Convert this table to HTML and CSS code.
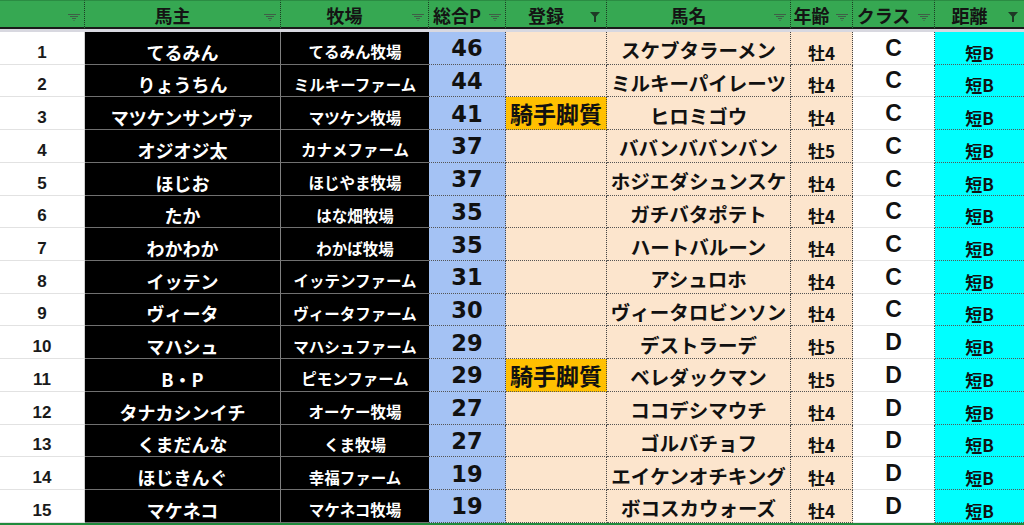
FILE: index.html
```html
<!DOCTYPE html>
<html lang="ja">
<head>
<meta charset="utf-8">
<title>馬主一覧</title>
<link rel="stylesheet" href="styles.css">
</head>
<body>
<div class="sheet">
  <div class="hd"><span class="lbl"></span><svg class="flt" viewBox="0 0 12 8"><path d="M0 0.5H12M2 2.5H10M4 4.5H8M5.5 6.5H6.5" /></svg></div>
  <div class="hd"><span class="lbl">馬主</span><svg class="flt" viewBox="0 0 12 8"><path d="M0 0.5H12M2 2.5H10M4 4.5H8M5.5 6.5H6.5" /></svg></div>
  <div class="hd"><span class="lbl">牧場</span><svg class="flt" viewBox="0 0 12 8"><path d="M0 0.5H12M2 2.5H10M4 4.5H8M5.5 6.5H6.5" /></svg></div>
  <div class="hd"><span class="lbl">総合P</span><svg class="flt" viewBox="0 0 12 8"><path d="M0 0.5H12M2 2.5H10M4 4.5H8M5.5 6.5H6.5" /></svg></div>
  <div class="hd"><span class="lbl">登録</span><svg class="flt on" viewBox="0 0 10 10"><path d="M0 0H10L6 4.5V10H4V4.5Z" /></svg></div>
  <div class="hd"><span class="lbl">馬名</span><svg class="flt" viewBox="0 0 12 8"><path d="M0 0.5H12M2 2.5H10M4 4.5H8M5.5 6.5H6.5" /></svg></div>
  <div class="hd"><span class="lbl">年齢</span><svg class="flt" viewBox="0 0 12 8"><path d="M0 0.5H12M2 2.5H10M4 4.5H8M5.5 6.5H6.5" /></svg></div>
  <div class="hd"><span class="lbl">クラス</span><svg class="flt" viewBox="0 0 12 8"><path d="M0 0.5H12M2 2.5H10M4 4.5H8M5.5 6.5H6.5" /></svg></div>
  <div class="hd last"><span class="lbl">距離</span><svg class="flt on" viewBox="0 0 10 10"><path d="M0 0H10L6 4.5V10H4V4.5Z" /></svg></div>
  <div class="band"></div>

  <div class="c no">1</div><div class="c own">てるみん</div><div class="c farm">てるみん牧場</div><div class="c pt">46</div><div class="c reg"></div><div class="c horse">スケブタラーメン</div><div class="c age">牡4</div><div class="c cls">C</div><div class="c dist">短B</div>
  <div class="c no">2</div><div class="c own">りょうちん</div><div class="c farm">ミルキーファーム</div><div class="c pt">44</div><div class="c reg"></div><div class="c horse">ミルキーパイレーツ</div><div class="c age">牡4</div><div class="c cls">C</div><div class="c dist">短B</div>
  <div class="c no">3</div><div class="c own">マツケンサンヴァ</div><div class="c farm">マツケン牧場</div><div class="c pt">41</div><div class="c reg hl">騎手脚質</div><div class="c horse">ヒロミゴウ</div><div class="c age">牡4</div><div class="c cls">C</div><div class="c dist">短B</div>
  <div class="c no">4</div><div class="c own">オジオジ太</div><div class="c farm">カナメファーム</div><div class="c pt">37</div><div class="c reg"></div><div class="c horse">ババンババンバン</div><div class="c age">牡5</div><div class="c cls">C</div><div class="c dist">短B</div>
  <div class="c no">5</div><div class="c own">ほじお</div><div class="c farm">ほじやま牧場</div><div class="c pt">37</div><div class="c reg"></div><div class="c horse">ホジエダシュンスケ</div><div class="c age">牡4</div><div class="c cls">C</div><div class="c dist">短B</div>
  <div class="c no">6</div><div class="c own">たか</div><div class="c farm">はな畑牧場</div><div class="c pt">35</div><div class="c reg"></div><div class="c horse">ガチバタポテト</div><div class="c age">牡4</div><div class="c cls">C</div><div class="c dist">短B</div>
  <div class="c no">7</div><div class="c own">わかわか</div><div class="c farm">わかば牧場</div><div class="c pt">35</div><div class="c reg"></div><div class="c horse">ハートバルーン</div><div class="c age">牡4</div><div class="c cls">C</div><div class="c dist">短B</div>
  <div class="c no">8</div><div class="c own">イッテン</div><div class="c farm">イッテンファーム</div><div class="c pt">31</div><div class="c reg"></div><div class="c horse">アシュロホ</div><div class="c age">牡4</div><div class="c cls">C</div><div class="c dist">短B</div>
  <div class="c no">9</div><div class="c own">ヴィータ</div><div class="c farm">ヴィータファーム</div><div class="c pt">30</div><div class="c reg"></div><div class="c horse">ヴィータロビンソン</div><div class="c age">牡4</div><div class="c cls">C</div><div class="c dist">短B</div>
  <div class="c no">10</div><div class="c own">マハシュ</div><div class="c farm">マハシュファーム</div><div class="c pt">29</div><div class="c reg"></div><div class="c horse">デストラーデ</div><div class="c age">牡5</div><div class="c cls">D</div><div class="c dist">短B</div>
  <div class="c no">11</div><div class="c own">B・P</div><div class="c farm">ピモンファーム</div><div class="c pt">29</div><div class="c reg hl">騎手脚質</div><div class="c horse">ベレダックマン</div><div class="c age">牡5</div><div class="c cls">D</div><div class="c dist">短B</div>
  <div class="c no">12</div><div class="c own">タナカシンイチ</div><div class="c farm">オーケー牧場</div><div class="c pt">27</div><div class="c reg"></div><div class="c horse">ココデシマウチ</div><div class="c age">牡4</div><div class="c cls">D</div><div class="c dist">短B</div>
  <div class="c no">13</div><div class="c own">くまだんな</div><div class="c farm">くま牧場</div><div class="c pt">27</div><div class="c reg"></div><div class="c horse">ゴルバチョフ</div><div class="c age">牡4</div><div class="c cls">D</div><div class="c dist">短B</div>
  <div class="c no">14</div><div class="c own">ほじきんぐ</div><div class="c farm">幸福ファーム</div><div class="c pt">19</div><div class="c reg"></div><div class="c horse">エイケンオチキング</div><div class="c age">牡4</div><div class="c cls">D</div><div class="c dist">短B</div>
  <div class="c no">15</div><div class="c own">マケネコ</div><div class="c farm">マケネコ牧場</div><div class="c pt">19</div><div class="c reg"></div><div class="c horse">ボコスカウォーズ</div><div class="c age">牡4</div><div class="c cls">D</div><div class="c dist">短B</div>
</div>
</body>
</html>
```

FILE: styles.css
```css
* { box-sizing: border-box; }
html, body { margin: 0; padding: 0; background: #ffffff; }
body {
  width: 1024px;
  height: 525px;
  overflow: hidden;
  font-family: "Noto Sans CJK JP", "Noto Sans", sans-serif;
  font-weight: 700;
  color: #111111;
}
.sheet {
  display: grid;
  grid-template-columns: 85px 196px 148px 77px 101px 184px 62px 82px 89px;
  grid-template-rows: 29px 3px repeat(15, 32.73px);
  border-bottom: 2px solid #1f8a3c;
}
.hd {
  display: flex;
  align-items: center;
  background: #36a852;
  border-top: 1px solid #2b8c43;
  border-right: 1px dotted #1d3b24;
  border-bottom: 2px solid #1a1a1a;
  font-size: 18px;
  line-height: 1;
  color: #141414;
  padding-right: 4px;
}
.hd.last { border-right: none; }
.lbl {
  flex: 1;
  text-align: center;
  padding-top: 1px;
}
.flt {
  width: 12px;
  height: 8px;
  margin-top: 7px;
  margin-left: 4px;
  fill: none;
  stroke: #3f5f47;
  stroke-width: 1.2;
}
.flt.on {
  width: 10px;
  height: 10px;
  margin-top: 6px;
  margin-right: 2px;
  fill: #1e3a25;
  stroke: none;
}
.band {
  grid-column: 1 / -1;
  background: #d8d8e0;
}
.c {
  display: flex;
  align-items: flex-end;
  justify-content: center;
  line-height: 1;
  white-space: nowrap;
  padding-bottom: 3px;
}
.no {
  background: #ffffff;
  border-bottom: 1px solid #e2e2e2;
  border-right: 1px solid #d0d0d0;
  font-family: "Liberation Sans", Arial, sans-serif;
  font-size: 17px;
  color: #1a1a1a;
  padding-bottom: 3px;
}
.own {
  background: #000000;
  color: #ffffff;
  border-bottom: 1px solid #707070;
  border-right: 1px solid #808080;
  font-size: 18px;
  padding-bottom: 3px;
}
.farm {
  background: #000000;
  color: #ffffff;
  border-bottom: 1px solid #707070;
  font-size: 15.5px;
  padding-bottom: 4px;
}
.pt {
  background: #a4c2f4;
  border-bottom: 1px dotted #555555;
  border-right: 1px dotted #444444;
  font-family: "DejaVu Sans", sans-serif;
  font-size: 22.5px;
  padding-bottom: 4px;
}
.reg {
  background: #fce5cd;
  border-bottom: 1px dotted #555555;
  border-right: 1px dotted #444444;
  font-size: 23px;
  padding-bottom: 4px;
}
.reg.hl { background: #ffc000; }
.horse {
  background: #fce5cd;
  border-bottom: 1px dotted #555555;
  border-right: 1px dotted #444444;
  font-size: 19.5px;
  padding-bottom: 4px;
}
.age {
  background: #fce5cd;
  border-bottom: 1px dotted #555555;
  border-right: 1px dotted #444444;
  font-size: 17px;
  padding-bottom: 3px;
}
.cls {
  background: #ffffff;
  border-bottom: 1px solid #e6e6e6;
  border-right: 1px dotted #444444;
  font-family: "Liberation Sans", Arial, sans-serif;
  font-size: 23px;
  padding-bottom: 4px;
}
.dist {
  background: #00ffff;
  border-bottom: 1px dotted #555555;
  font-size: 17px;
  padding-bottom: 3px;
}
```
